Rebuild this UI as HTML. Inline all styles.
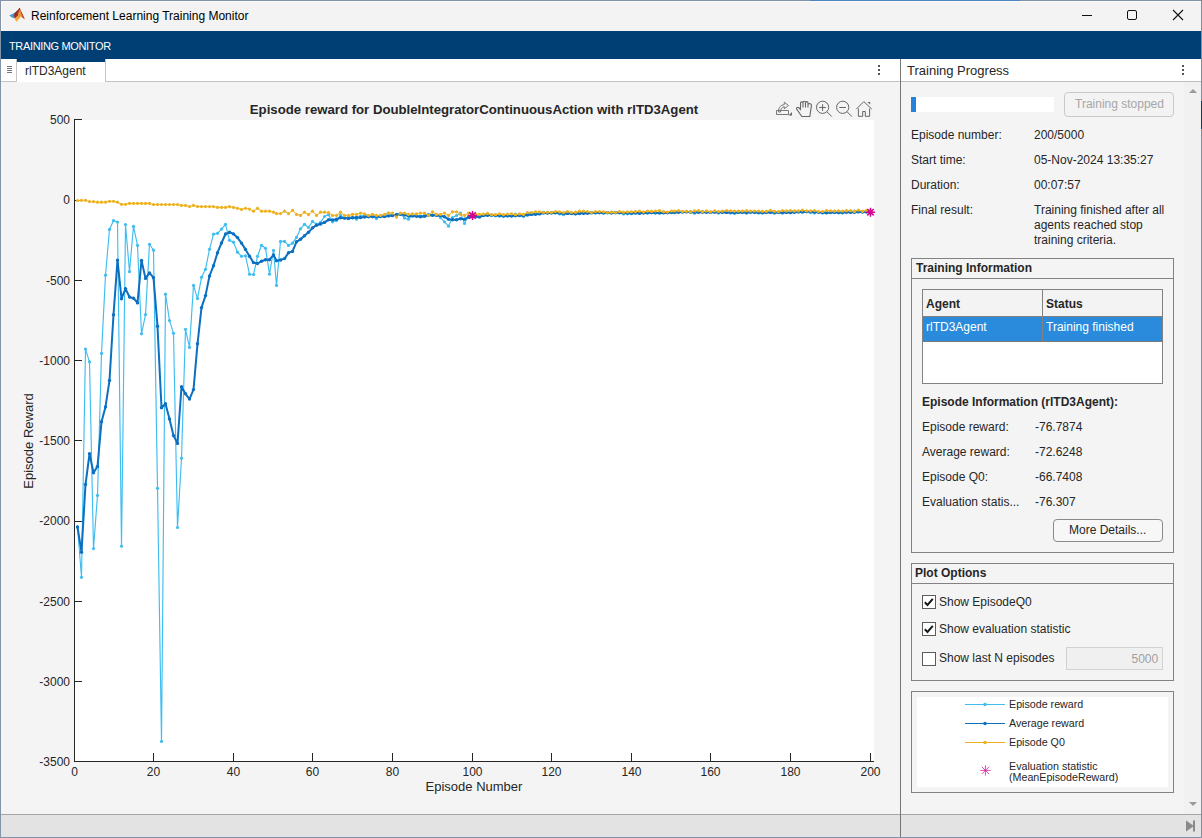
<!DOCTYPE html>
<html><head><meta charset="utf-8">
<style>
*{margin:0;padding:0;box-sizing:border-box}
html,body{width:1202px;height:838px;overflow:hidden;background:#f3f3f3;font-family:"Liberation Sans",sans-serif;color:#262626}
.a{position:absolute}
.t{position:absolute;white-space:nowrap;line-height:1;font-size:12px}
svg{position:absolute;left:0;top:0}
</style></head><body>
<!-- window frame -->
<div class="a" style="left:0;top:0;width:1202px;height:1px;background:#8394a8"></div>
<div class="a" style="left:0;top:0;width:1px;height:838px;background:#8394a8"></div>
<div class="a" style="left:1201px;top:0;width:1px;height:838px;background:#8a8d92"></div>
<div class="a" style="left:1201px;top:101px;width:1px;height:28px;background:#003f73"></div>
<div class="a" style="left:810px;top:0;width:210px;height:1px;background:#4a86c4"></div>
<div class="a" style="left:1px;top:1px;width:1200px;height:1px;background:#fbfbfb"></div>
<div class="a" style="left:1px;top:1px;width:1px;height:836px;background:#fbfbfb"></div>

<!-- title bar -->
<svg width="30" height="30" style="left:0;top:0" viewBox="0 0 30 30">
  <defs><linearGradient id="lg1" x1="0" y1="0" x2="0" y2="1"><stop offset="0" stop-color="#e07a2a"/><stop offset="1" stop-color="#f6b640"/></linearGradient></defs>
  <path d="M9.2,15.6L13.5,13.6L16,12L18.2,9.8L15.5,17.5L12.8,18Z" fill="#3f97dc"/>
  <path d="M13.8,14L16,12L18.2,9.8L16.5,16Z" fill="#2a5f98"/>
  <path d="M14,14.2L19.6,7.9L18,16.5L14.5,18.8Z" fill="#a32d17"/>
  <path d="M19.6,7.9L21.5,12.5L24.8,19.2L21,16.5L16.4,22L14.6,18.6L18.2,15.2Z" fill="url(#lg1)"/>
  <path d="M19.7,8.1L22,12.8L24.8,19.2L22.3,17.4L20.8,11.5Z" fill="#c2401c"/>
  <path d="M18.8,8.6L19.6,7.9L20.4,9.2L19,10.5Z" fill="#6d2a12"/>
</svg>
<div class="t" style="left:31px;top:10px;font-size:12px;color:#000">Reinforcement Learning Training Monitor</div>
<div class="a" style="left:1082px;top:15px;width:10px;height:1px;background:#111"></div>
<div class="a" style="left:1127px;top:10px;width:10px;height:10px;border:1px solid #111;border-radius:2px"></div>
<svg width="12" height="12" style="left:1172px;top:9px" viewBox="0 0 12 12"><path d="M1,1L11,11M11,1L1,11" stroke="#111" stroke-width="1.1"/></svg>

<!-- navy toolstrip -->
<div class="a" style="left:1px;top:31px;width:1200px;height:28px;background:#003f73"></div>
<div class="t" style="left:9px;top:41px;font-size:11px;color:#fff;letter-spacing:-0.35px">TRAINING MONITOR</div>

<!-- document tab strip (left) -->
<div class="a" style="left:1px;top:59px;width:899px;height:23px;background:#fff;border-bottom:1px solid #c4c4c4"></div>
<div class="a" style="left:1px;top:59px;width:16px;height:23px;background:#fff;border-right:1px solid #c4c4c4;border-bottom:1px solid #c4c4c4"></div>
<div class="a" style="left:7px;top:66px;width:5px;height:1px;background:#777"></div>
<div class="a" style="left:7px;top:68px;width:5px;height:1px;background:#777"></div>
<div class="a" style="left:7px;top:70px;width:5px;height:1px;background:#777"></div>
<div class="a" style="left:7px;top:72px;width:5px;height:1px;background:#777"></div>
<div class="a" style="left:17px;top:59px;width:89px;height:23px;background:#fff;border-right:1px solid #c4c4c4"></div>
<div class="a" style="left:17px;top:59px;width:88px;height:3px;background:#003f73"></div>
<div class="t" style="left:25px;top:65px;font-size:12px;color:#262626">rlTD3Agent</div>
<div class="a" style="left:878px;top:65px;width:2px;height:2px;background:#555"></div>
<div class="a" style="left:878px;top:69px;width:2px;height:2px;background:#555"></div>
<div class="a" style="left:878px;top:73px;width:2px;height:2px;background:#555"></div>

<!-- plot area bg -->
<div class="a" style="left:1px;top:82px;width:899px;height:732px;background:#f4f4f4"></div>

<!-- chart -->
<svg width="1202" height="838" viewBox="0 0 1202 838">
<rect x="74" y="120" width="800" height="642" fill="#fff"/>
<path d="M74.5,119V761.5H874" stroke="#262626" stroke-width="1" fill="none" shape-rendering="crispEdges"/>
<path d="M74,119.5H82M74,200.5H82M74,280.5H82M74,360.5H82M74,440.5H82M74,521.5H82M74,601.5H82M74,681.5H82M74,761.5H82M74.5,761V753M153.5,761V753M233.5,761V753M312.5,761V753M392.5,761V753M472.5,761V753M551.5,761V753M631.5,761V753M710.5,761V753M790.5,761V753M870.5,761V753" stroke="#262626" stroke-width="1" fill="none" shape-rendering="crispEdges"/>
<g font-family="Liberation Sans" font-size="12" fill="#262626"><text x="70" y="124.1" text-anchor="end">500</text><text x="70" y="204.4" text-anchor="end">0</text><text x="70" y="284.6" text-anchor="end">-500</text><text x="70" y="364.9" text-anchor="end">-1000</text><text x="70" y="445.1" text-anchor="end">-1500</text><text x="70" y="525.3" text-anchor="end">-2000</text><text x="70" y="605.6" text-anchor="end">-2500</text><text x="70" y="685.8" text-anchor="end">-3000</text><text x="70" y="766.1" text-anchor="end">-3500</text><text x="74.5" y="775.9" text-anchor="middle">0</text><text x="153.5" y="775.9" text-anchor="middle">20</text><text x="233.5" y="775.9" text-anchor="middle">40</text><text x="312.5" y="775.9" text-anchor="middle">60</text><text x="392.5" y="775.9" text-anchor="middle">80</text><text x="472.5" y="775.9" text-anchor="middle">100</text><text x="551.5" y="775.9" text-anchor="middle">120</text><text x="631.5" y="775.9" text-anchor="middle">140</text><text x="710.5" y="775.9" text-anchor="middle">160</text><text x="790.5" y="775.9" text-anchor="middle">180</text><text x="870.5" y="775.9" text-anchor="middle">200</text></g>
<text x="474" y="790.5" text-anchor="middle" font-family="Liberation Sans" font-size="13" fill="#262626">Episode Number</text>
<text transform="translate(33.3,441) rotate(-90)" text-anchor="middle" font-family="Liberation Sans" font-size="13" fill="#262626">Episode Reward</text>
<text x="474" y="114" text-anchor="middle" font-family="Liberation Sans" font-weight="bold" font-size="13.2" fill="#262626">Episode reward for DoubleIntegratorContinuousAction with rlTD3Agent</text>
<polyline points="77.5,527.0 81.5,577.3 85.5,349.1 89.5,361.8 93.5,548.6 97.5,495.4 101.5,353.4 105.5,275.2 109.5,229.4 113.5,220.5 117.5,222.1 121.5,546.2 125.5,224.6 129.5,271.7 133.5,226.4 137.5,245.4 141.5,333.8 145.5,314.6 149.5,244.3 153.5,250.2 157.5,488.3 161.5,741.4 165.5,294.2 169.5,320.6 173.5,333.3 177.5,527.5 181.5,458.2 185.5,329.3 189.5,347.4 193.5,285.4 197.5,298.6 201.5,277.3 205.5,269.3 209.5,249.3 213.5,234.2 217.5,233.3 221.5,229.1 225.5,224.3 229.5,240.3 233.5,242.2 237.5,252.2 241.5,256.3 245.5,255.8 249.5,274.2 253.5,274.6 257.5,256.3 261.5,245.3 265.5,248.3 269.5,274.2 273.5,250.4 276.5,285.4 280.5,241.4 284.5,241.4 288.5,245.4 292.5,243.2 296.5,237.4 300.5,228.8 304.5,224.3 308.5,227.5 312.5,221.4 316.5,224.2 320.5,222.4 324.5,216.5 328.5,214.6 332.5,221.8 336.5,220.6 340.5,215.2 344.5,218.2 348.5,216.8 352.5,217.6 356.5,219.2 360.5,216.0 364.5,215.2 368.5,216.0 372.5,216.8 376.5,218.6 380.5,216.0 384.5,215.2 388.5,213.1 392.5,215.2 396.5,214.4 400.5,213.6 404.5,218.1 408.5,219.2 412.5,215.2 416.5,215.2 420.5,216.0 424.5,215.2 428.5,214.4 432.5,215.2 436.5,215.2 440.5,217.6 444.5,221.8 448.5,226.2 452.5,217.6 456.5,215.5 460.5,213.1 464.5,223.5 468.5,216.0 472.5,215.2 475.5,215.7 479.5,215.1 483.5,215.4 487.5,215.0 491.5,215.0 495.5,216.0 499.5,216.1 503.5,216.6 507.5,215.7 511.5,215.7 515.5,214.2 519.5,215.3 523.5,216.6 527.5,213.2 531.5,212.9 535.5,213.8 539.5,212.9 543.5,212.4 547.5,213.1 551.5,212.7 555.5,212.8 559.5,214.0 563.5,214.7 567.5,212.9 571.5,213.5 575.5,214.0 579.5,212.4 583.5,213.2 587.5,212.7 591.5,212.4 595.5,212.7 599.5,212.3 603.5,213.3 607.5,212.5 611.5,213.2 615.5,212.3 619.5,212.4 623.5,213.9 627.5,213.8 631.5,213.7 635.5,211.9 639.5,212.9 643.5,212.5 647.5,213.1 651.5,212.7 655.5,212.9 659.5,213.0 663.5,212.5 667.5,212.5 671.5,211.9 674.5,212.3 678.5,211.8 682.5,211.9 686.5,211.7 690.5,212.3 694.5,213.2 698.5,211.9 702.5,211.7 706.5,211.8 710.5,212.4 714.5,212.1 718.5,213.1 722.5,211.9 726.5,212.4 730.5,212.9 734.5,213.3 738.5,211.8 742.5,211.5 746.5,213.2 750.5,211.8 754.5,212.6 758.5,213.1 762.5,212.8 766.5,211.8 770.5,211.6 774.5,213.2 778.5,212.1 782.5,213.2 786.5,211.9 790.5,212.6 794.5,211.5 798.5,211.3 802.5,212.2 806.5,211.3 810.5,212.6 814.5,213.0 818.5,212.0 822.5,213.1 826.5,212.8 830.5,212.3 834.5,211.9 838.5,212.8 842.5,213.0 846.5,211.4 850.5,212.5 854.5,211.2 858.5,211.3 862.5,212.3 866.5,212.1 870.5,212.3" fill="none" stroke="#40bdf0" stroke-width="1.15" stroke-linejoin="round"/><g fill="#40bdf0"><circle cx="77.5" cy="527.0" r="1.6"/><circle cx="81.5" cy="577.3" r="1.6"/><circle cx="85.5" cy="349.1" r="1.6"/><circle cx="89.5" cy="361.8" r="1.6"/><circle cx="93.5" cy="548.6" r="1.6"/><circle cx="97.5" cy="495.4" r="1.6"/><circle cx="101.5" cy="353.4" r="1.6"/><circle cx="105.5" cy="275.2" r="1.6"/><circle cx="109.5" cy="229.4" r="1.6"/><circle cx="113.5" cy="220.5" r="1.6"/><circle cx="117.5" cy="222.1" r="1.6"/><circle cx="121.5" cy="546.2" r="1.6"/><circle cx="125.5" cy="224.6" r="1.6"/><circle cx="129.5" cy="271.7" r="1.6"/><circle cx="133.5" cy="226.4" r="1.6"/><circle cx="137.5" cy="245.4" r="1.6"/><circle cx="141.5" cy="333.8" r="1.6"/><circle cx="145.5" cy="314.6" r="1.6"/><circle cx="149.5" cy="244.3" r="1.6"/><circle cx="153.5" cy="250.2" r="1.6"/><circle cx="157.5" cy="488.3" r="1.6"/><circle cx="161.5" cy="741.4" r="1.6"/><circle cx="165.5" cy="294.2" r="1.6"/><circle cx="169.5" cy="320.6" r="1.6"/><circle cx="173.5" cy="333.3" r="1.6"/><circle cx="177.5" cy="527.5" r="1.6"/><circle cx="181.5" cy="458.2" r="1.6"/><circle cx="185.5" cy="329.3" r="1.6"/><circle cx="189.5" cy="347.4" r="1.6"/><circle cx="193.5" cy="285.4" r="1.6"/><circle cx="197.5" cy="298.6" r="1.6"/><circle cx="201.5" cy="277.3" r="1.6"/><circle cx="205.5" cy="269.3" r="1.6"/><circle cx="209.5" cy="249.3" r="1.6"/><circle cx="213.5" cy="234.2" r="1.6"/><circle cx="217.5" cy="233.3" r="1.6"/><circle cx="221.5" cy="229.1" r="1.6"/><circle cx="225.5" cy="224.3" r="1.6"/><circle cx="229.5" cy="240.3" r="1.6"/><circle cx="233.5" cy="242.2" r="1.6"/><circle cx="237.5" cy="252.2" r="1.6"/><circle cx="241.5" cy="256.3" r="1.6"/><circle cx="245.5" cy="255.8" r="1.6"/><circle cx="249.5" cy="274.2" r="1.6"/><circle cx="253.5" cy="274.6" r="1.6"/><circle cx="257.5" cy="256.3" r="1.6"/><circle cx="261.5" cy="245.3" r="1.6"/><circle cx="265.5" cy="248.3" r="1.6"/><circle cx="269.5" cy="274.2" r="1.6"/><circle cx="273.5" cy="250.4" r="1.6"/><circle cx="276.5" cy="285.4" r="1.6"/><circle cx="280.5" cy="241.4" r="1.6"/><circle cx="284.5" cy="241.4" r="1.6"/><circle cx="288.5" cy="245.4" r="1.6"/><circle cx="292.5" cy="243.2" r="1.6"/><circle cx="296.5" cy="237.4" r="1.6"/><circle cx="300.5" cy="228.8" r="1.6"/><circle cx="304.5" cy="224.3" r="1.6"/><circle cx="308.5" cy="227.5" r="1.6"/><circle cx="312.5" cy="221.4" r="1.6"/><circle cx="316.5" cy="224.2" r="1.6"/><circle cx="320.5" cy="222.4" r="1.6"/><circle cx="324.5" cy="216.5" r="1.6"/><circle cx="328.5" cy="214.6" r="1.6"/><circle cx="332.5" cy="221.8" r="1.6"/><circle cx="336.5" cy="220.6" r="1.6"/><circle cx="340.5" cy="215.2" r="1.6"/><circle cx="344.5" cy="218.2" r="1.6"/><circle cx="348.5" cy="216.8" r="1.6"/><circle cx="352.5" cy="217.6" r="1.6"/><circle cx="356.5" cy="219.2" r="1.6"/><circle cx="360.5" cy="216.0" r="1.6"/><circle cx="364.5" cy="215.2" r="1.6"/><circle cx="368.5" cy="216.0" r="1.6"/><circle cx="372.5" cy="216.8" r="1.6"/><circle cx="376.5" cy="218.6" r="1.6"/><circle cx="380.5" cy="216.0" r="1.6"/><circle cx="384.5" cy="215.2" r="1.6"/><circle cx="388.5" cy="213.1" r="1.6"/><circle cx="392.5" cy="215.2" r="1.6"/><circle cx="396.5" cy="214.4" r="1.6"/><circle cx="400.5" cy="213.6" r="1.6"/><circle cx="404.5" cy="218.1" r="1.6"/><circle cx="408.5" cy="219.2" r="1.6"/><circle cx="412.5" cy="215.2" r="1.6"/><circle cx="416.5" cy="215.2" r="1.6"/><circle cx="420.5" cy="216.0" r="1.6"/><circle cx="424.5" cy="215.2" r="1.6"/><circle cx="428.5" cy="214.4" r="1.6"/><circle cx="432.5" cy="215.2" r="1.6"/><circle cx="436.5" cy="215.2" r="1.6"/><circle cx="440.5" cy="217.6" r="1.6"/><circle cx="444.5" cy="221.8" r="1.6"/><circle cx="448.5" cy="226.2" r="1.6"/><circle cx="452.5" cy="217.6" r="1.6"/><circle cx="456.5" cy="215.5" r="1.6"/><circle cx="460.5" cy="213.1" r="1.6"/><circle cx="464.5" cy="223.5" r="1.6"/><circle cx="468.5" cy="216.0" r="1.6"/><circle cx="472.5" cy="215.2" r="1.6"/><circle cx="475.5" cy="215.7" r="1.6"/><circle cx="479.5" cy="215.1" r="1.6"/><circle cx="483.5" cy="215.4" r="1.6"/><circle cx="487.5" cy="215.0" r="1.6"/><circle cx="491.5" cy="215.0" r="1.6"/><circle cx="495.5" cy="216.0" r="1.6"/><circle cx="499.5" cy="216.1" r="1.6"/><circle cx="503.5" cy="216.6" r="1.6"/><circle cx="507.5" cy="215.7" r="1.6"/><circle cx="511.5" cy="215.7" r="1.6"/><circle cx="515.5" cy="214.2" r="1.6"/><circle cx="519.5" cy="215.3" r="1.6"/><circle cx="523.5" cy="216.6" r="1.6"/><circle cx="527.5" cy="213.2" r="1.6"/><circle cx="531.5" cy="212.9" r="1.6"/><circle cx="535.5" cy="213.8" r="1.6"/><circle cx="539.5" cy="212.9" r="1.6"/><circle cx="543.5" cy="212.4" r="1.6"/><circle cx="547.5" cy="213.1" r="1.6"/><circle cx="551.5" cy="212.7" r="1.6"/><circle cx="555.5" cy="212.8" r="1.6"/><circle cx="559.5" cy="214.0" r="1.6"/><circle cx="563.5" cy="214.7" r="1.6"/><circle cx="567.5" cy="212.9" r="1.6"/><circle cx="571.5" cy="213.5" r="1.6"/><circle cx="575.5" cy="214.0" r="1.6"/><circle cx="579.5" cy="212.4" r="1.6"/><circle cx="583.5" cy="213.2" r="1.6"/><circle cx="587.5" cy="212.7" r="1.6"/><circle cx="591.5" cy="212.4" r="1.6"/><circle cx="595.5" cy="212.7" r="1.6"/><circle cx="599.5" cy="212.3" r="1.6"/><circle cx="603.5" cy="213.3" r="1.6"/><circle cx="607.5" cy="212.5" r="1.6"/><circle cx="611.5" cy="213.2" r="1.6"/><circle cx="615.5" cy="212.3" r="1.6"/><circle cx="619.5" cy="212.4" r="1.6"/><circle cx="623.5" cy="213.9" r="1.6"/><circle cx="627.5" cy="213.8" r="1.6"/><circle cx="631.5" cy="213.7" r="1.6"/><circle cx="635.5" cy="211.9" r="1.6"/><circle cx="639.5" cy="212.9" r="1.6"/><circle cx="643.5" cy="212.5" r="1.6"/><circle cx="647.5" cy="213.1" r="1.6"/><circle cx="651.5" cy="212.7" r="1.6"/><circle cx="655.5" cy="212.9" r="1.6"/><circle cx="659.5" cy="213.0" r="1.6"/><circle cx="663.5" cy="212.5" r="1.6"/><circle cx="667.5" cy="212.5" r="1.6"/><circle cx="671.5" cy="211.9" r="1.6"/><circle cx="674.5" cy="212.3" r="1.6"/><circle cx="678.5" cy="211.8" r="1.6"/><circle cx="682.5" cy="211.9" r="1.6"/><circle cx="686.5" cy="211.7" r="1.6"/><circle cx="690.5" cy="212.3" r="1.6"/><circle cx="694.5" cy="213.2" r="1.6"/><circle cx="698.5" cy="211.9" r="1.6"/><circle cx="702.5" cy="211.7" r="1.6"/><circle cx="706.5" cy="211.8" r="1.6"/><circle cx="710.5" cy="212.4" r="1.6"/><circle cx="714.5" cy="212.1" r="1.6"/><circle cx="718.5" cy="213.1" r="1.6"/><circle cx="722.5" cy="211.9" r="1.6"/><circle cx="726.5" cy="212.4" r="1.6"/><circle cx="730.5" cy="212.9" r="1.6"/><circle cx="734.5" cy="213.3" r="1.6"/><circle cx="738.5" cy="211.8" r="1.6"/><circle cx="742.5" cy="211.5" r="1.6"/><circle cx="746.5" cy="213.2" r="1.6"/><circle cx="750.5" cy="211.8" r="1.6"/><circle cx="754.5" cy="212.6" r="1.6"/><circle cx="758.5" cy="213.1" r="1.6"/><circle cx="762.5" cy="212.8" r="1.6"/><circle cx="766.5" cy="211.8" r="1.6"/><circle cx="770.5" cy="211.6" r="1.6"/><circle cx="774.5" cy="213.2" r="1.6"/><circle cx="778.5" cy="212.1" r="1.6"/><circle cx="782.5" cy="213.2" r="1.6"/><circle cx="786.5" cy="211.9" r="1.6"/><circle cx="790.5" cy="212.6" r="1.6"/><circle cx="794.5" cy="211.5" r="1.6"/><circle cx="798.5" cy="211.3" r="1.6"/><circle cx="802.5" cy="212.2" r="1.6"/><circle cx="806.5" cy="211.3" r="1.6"/><circle cx="810.5" cy="212.6" r="1.6"/><circle cx="814.5" cy="213.0" r="1.6"/><circle cx="818.5" cy="212.0" r="1.6"/><circle cx="822.5" cy="213.1" r="1.6"/><circle cx="826.5" cy="212.8" r="1.6"/><circle cx="830.5" cy="212.3" r="1.6"/><circle cx="834.5" cy="211.9" r="1.6"/><circle cx="838.5" cy="212.8" r="1.6"/><circle cx="842.5" cy="213.0" r="1.6"/><circle cx="846.5" cy="211.4" r="1.6"/><circle cx="850.5" cy="212.5" r="1.6"/><circle cx="854.5" cy="211.2" r="1.6"/><circle cx="858.5" cy="211.3" r="1.6"/><circle cx="862.5" cy="212.3" r="1.6"/><circle cx="866.5" cy="212.1" r="1.6"/><circle cx="870.5" cy="212.3" r="1.6"/></g>
<polyline points="77.5,527.0 81.5,552.2 85.5,484.5 89.5,453.8 93.5,472.8 97.5,466.4 101.5,421.7 105.5,406.9 109.5,380.4 113.5,314.8 117.5,260.1 121.5,298.7 125.5,288.6 129.5,297.0 133.5,298.2 137.5,302.9 141.5,260.4 145.5,278.4 149.5,272.9 153.5,277.7 157.5,326.2 161.5,407.8 165.5,403.7 169.5,419.0 173.5,435.6 177.5,443.4 181.5,386.8 185.5,393.8 189.5,399.1 193.5,389.6 197.5,343.8 201.5,307.6 205.5,295.6 209.5,276.0 213.5,265.7 217.5,252.7 221.5,243.0 225.5,234.0 229.5,232.3 233.5,233.9 237.5,237.6 241.5,243.1 245.5,249.4 249.5,256.2 253.5,262.6 257.5,263.5 261.5,261.2 265.5,259.7 269.5,259.7 273.5,254.9 276.5,260.7 280.5,260.0 284.5,258.6 288.5,252.8 292.5,251.4 296.5,241.8 300.5,239.3 304.5,235.8 308.5,232.3 312.5,227.9 316.5,225.2 320.5,224.0 324.5,222.4 328.5,219.8 332.5,219.9 336.5,219.2 340.5,217.7 344.5,218.1 348.5,218.5 352.5,217.7 356.5,217.4 360.5,217.6 364.5,217.0 368.5,216.8 372.5,216.6 376.5,216.5 380.5,216.5 384.5,216.5 388.5,215.9 392.5,215.6 396.5,214.8 400.5,214.3 404.5,214.9 408.5,216.1 412.5,216.1 416.5,216.3 420.5,216.7 424.5,216.2 428.5,215.2 432.5,215.2 436.5,215.2 440.5,215.5 444.5,216.8 448.5,219.2 452.5,219.7 456.5,219.7 460.5,218.8 464.5,219.2 468.5,217.2 472.5,216.7 475.5,216.7 479.5,217.1 483.5,215.5 487.5,215.3 491.5,215.2 495.5,215.3 499.5,215.5 503.5,215.8 507.5,215.9 511.5,216.0 515.5,215.7 519.5,215.5 523.5,215.5 527.5,215.0 531.5,214.4 535.5,214.3 539.5,213.9 543.5,213.0 547.5,213.0 551.5,213.0 555.5,212.8 559.5,213.0 563.5,213.4 567.5,213.4 571.5,213.6 575.5,213.8 579.5,213.5 583.5,213.2 587.5,213.2 591.5,212.9 595.5,212.7 599.5,212.7 603.5,212.7 607.5,212.7 611.5,212.8 615.5,212.7 619.5,212.8 623.5,212.9 627.5,213.1 631.5,213.2 635.5,213.1 639.5,213.2 643.5,213.0 647.5,212.8 651.5,212.6 655.5,212.8 659.5,212.9 663.5,212.9 667.5,212.7 671.5,212.6 674.5,212.5 678.5,212.2 682.5,212.1 686.5,211.9 690.5,212.0 694.5,212.2 698.5,212.2 702.5,212.2 706.5,212.2 710.5,212.2 714.5,212.0 718.5,212.2 722.5,212.3 726.5,212.4 730.5,212.5 734.5,212.7 738.5,212.4 742.5,212.4 746.5,212.5 750.5,212.3 754.5,212.2 758.5,212.4 762.5,212.7 766.5,212.4 770.5,212.4 774.5,212.5 778.5,212.3 782.5,212.4 786.5,212.4 790.5,212.6 794.5,212.3 798.5,212.1 802.5,211.9 806.5,211.8 810.5,211.8 814.5,212.1 818.5,212.2 822.5,212.4 826.5,212.7 830.5,212.6 834.5,212.4 838.5,212.6 842.5,212.6 846.5,212.3 850.5,212.3 854.5,212.2 858.5,211.9 862.5,211.7 866.5,211.9 870.5,211.8" fill="none" stroke="#0d6fc0" stroke-width="2" stroke-linejoin="round"/><g fill="#0d6fc0"><circle cx="77.5" cy="527.0" r="1.7"/><circle cx="81.5" cy="552.2" r="1.7"/><circle cx="85.5" cy="484.5" r="1.7"/><circle cx="89.5" cy="453.8" r="1.7"/><circle cx="93.5" cy="472.8" r="1.7"/><circle cx="97.5" cy="466.4" r="1.7"/><circle cx="101.5" cy="421.7" r="1.7"/><circle cx="105.5" cy="406.9" r="1.7"/><circle cx="109.5" cy="380.4" r="1.7"/><circle cx="113.5" cy="314.8" r="1.7"/><circle cx="117.5" cy="260.1" r="1.7"/><circle cx="121.5" cy="298.7" r="1.7"/><circle cx="125.5" cy="288.6" r="1.7"/><circle cx="129.5" cy="297.0" r="1.7"/><circle cx="133.5" cy="298.2" r="1.7"/><circle cx="137.5" cy="302.9" r="1.7"/><circle cx="141.5" cy="260.4" r="1.7"/><circle cx="145.5" cy="278.4" r="1.7"/><circle cx="149.5" cy="272.9" r="1.7"/><circle cx="153.5" cy="277.7" r="1.7"/><circle cx="157.5" cy="326.2" r="1.7"/><circle cx="161.5" cy="407.8" r="1.7"/><circle cx="165.5" cy="403.7" r="1.7"/><circle cx="169.5" cy="419.0" r="1.7"/><circle cx="173.5" cy="435.6" r="1.7"/><circle cx="177.5" cy="443.4" r="1.7"/><circle cx="181.5" cy="386.8" r="1.7"/><circle cx="185.5" cy="393.8" r="1.7"/><circle cx="189.5" cy="399.1" r="1.7"/><circle cx="193.5" cy="389.6" r="1.7"/><circle cx="197.5" cy="343.8" r="1.7"/><circle cx="201.5" cy="307.6" r="1.7"/><circle cx="205.5" cy="295.6" r="1.7"/><circle cx="209.5" cy="276.0" r="1.7"/><circle cx="213.5" cy="265.7" r="1.7"/><circle cx="217.5" cy="252.7" r="1.7"/><circle cx="221.5" cy="243.0" r="1.7"/><circle cx="225.5" cy="234.0" r="1.7"/><circle cx="229.5" cy="232.3" r="1.7"/><circle cx="233.5" cy="233.9" r="1.7"/><circle cx="237.5" cy="237.6" r="1.7"/><circle cx="241.5" cy="243.1" r="1.7"/><circle cx="245.5" cy="249.4" r="1.7"/><circle cx="249.5" cy="256.2" r="1.7"/><circle cx="253.5" cy="262.6" r="1.7"/><circle cx="257.5" cy="263.5" r="1.7"/><circle cx="261.5" cy="261.2" r="1.7"/><circle cx="265.5" cy="259.7" r="1.7"/><circle cx="269.5" cy="259.7" r="1.7"/><circle cx="273.5" cy="254.9" r="1.7"/><circle cx="276.5" cy="260.7" r="1.7"/><circle cx="280.5" cy="260.0" r="1.7"/><circle cx="284.5" cy="258.6" r="1.7"/><circle cx="288.5" cy="252.8" r="1.7"/><circle cx="292.5" cy="251.4" r="1.7"/><circle cx="296.5" cy="241.8" r="1.7"/><circle cx="300.5" cy="239.3" r="1.7"/><circle cx="304.5" cy="235.8" r="1.7"/><circle cx="308.5" cy="232.3" r="1.7"/><circle cx="312.5" cy="227.9" r="1.7"/><circle cx="316.5" cy="225.2" r="1.7"/><circle cx="320.5" cy="224.0" r="1.7"/><circle cx="324.5" cy="222.4" r="1.7"/><circle cx="328.5" cy="219.8" r="1.7"/><circle cx="332.5" cy="219.9" r="1.7"/><circle cx="336.5" cy="219.2" r="1.7"/><circle cx="340.5" cy="217.7" r="1.7"/><circle cx="344.5" cy="218.1" r="1.7"/><circle cx="348.5" cy="218.5" r="1.7"/><circle cx="352.5" cy="217.7" r="1.7"/><circle cx="356.5" cy="217.4" r="1.7"/><circle cx="360.5" cy="217.6" r="1.7"/><circle cx="364.5" cy="217.0" r="1.7"/><circle cx="368.5" cy="216.8" r="1.7"/><circle cx="372.5" cy="216.6" r="1.7"/><circle cx="376.5" cy="216.5" r="1.7"/><circle cx="380.5" cy="216.5" r="1.7"/><circle cx="384.5" cy="216.5" r="1.7"/><circle cx="388.5" cy="215.9" r="1.7"/><circle cx="392.5" cy="215.6" r="1.7"/><circle cx="396.5" cy="214.8" r="1.7"/><circle cx="400.5" cy="214.3" r="1.7"/><circle cx="404.5" cy="214.9" r="1.7"/><circle cx="408.5" cy="216.1" r="1.7"/><circle cx="412.5" cy="216.1" r="1.7"/><circle cx="416.5" cy="216.3" r="1.7"/><circle cx="420.5" cy="216.7" r="1.7"/><circle cx="424.5" cy="216.2" r="1.7"/><circle cx="428.5" cy="215.2" r="1.7"/><circle cx="432.5" cy="215.2" r="1.7"/><circle cx="436.5" cy="215.2" r="1.7"/><circle cx="440.5" cy="215.5" r="1.7"/><circle cx="444.5" cy="216.8" r="1.7"/><circle cx="448.5" cy="219.2" r="1.7"/><circle cx="452.5" cy="219.7" r="1.7"/><circle cx="456.5" cy="219.7" r="1.7"/><circle cx="460.5" cy="218.8" r="1.7"/><circle cx="464.5" cy="219.2" r="1.7"/><circle cx="468.5" cy="217.2" r="1.7"/><circle cx="472.5" cy="216.7" r="1.7"/><circle cx="475.5" cy="216.7" r="1.7"/><circle cx="479.5" cy="217.1" r="1.7"/><circle cx="483.5" cy="215.5" r="1.7"/><circle cx="487.5" cy="215.3" r="1.7"/><circle cx="491.5" cy="215.2" r="1.7"/><circle cx="495.5" cy="215.3" r="1.7"/><circle cx="499.5" cy="215.5" r="1.7"/><circle cx="503.5" cy="215.8" r="1.7"/><circle cx="507.5" cy="215.9" r="1.7"/><circle cx="511.5" cy="216.0" r="1.7"/><circle cx="515.5" cy="215.7" r="1.7"/><circle cx="519.5" cy="215.5" r="1.7"/><circle cx="523.5" cy="215.5" r="1.7"/><circle cx="527.5" cy="215.0" r="1.7"/><circle cx="531.5" cy="214.4" r="1.7"/><circle cx="535.5" cy="214.3" r="1.7"/><circle cx="539.5" cy="213.9" r="1.7"/><circle cx="543.5" cy="213.0" r="1.7"/><circle cx="547.5" cy="213.0" r="1.7"/><circle cx="551.5" cy="213.0" r="1.7"/><circle cx="555.5" cy="212.8" r="1.7"/><circle cx="559.5" cy="213.0" r="1.7"/><circle cx="563.5" cy="213.4" r="1.7"/><circle cx="567.5" cy="213.4" r="1.7"/><circle cx="571.5" cy="213.6" r="1.7"/><circle cx="575.5" cy="213.8" r="1.7"/><circle cx="579.5" cy="213.5" r="1.7"/><circle cx="583.5" cy="213.2" r="1.7"/><circle cx="587.5" cy="213.2" r="1.7"/><circle cx="591.5" cy="212.9" r="1.7"/><circle cx="595.5" cy="212.7" r="1.7"/><circle cx="599.5" cy="212.7" r="1.7"/><circle cx="603.5" cy="212.7" r="1.7"/><circle cx="607.5" cy="212.7" r="1.7"/><circle cx="611.5" cy="212.8" r="1.7"/><circle cx="615.5" cy="212.7" r="1.7"/><circle cx="619.5" cy="212.8" r="1.7"/><circle cx="623.5" cy="212.9" r="1.7"/><circle cx="627.5" cy="213.1" r="1.7"/><circle cx="631.5" cy="213.2" r="1.7"/><circle cx="635.5" cy="213.1" r="1.7"/><circle cx="639.5" cy="213.2" r="1.7"/><circle cx="643.5" cy="213.0" r="1.7"/><circle cx="647.5" cy="212.8" r="1.7"/><circle cx="651.5" cy="212.6" r="1.7"/><circle cx="655.5" cy="212.8" r="1.7"/><circle cx="659.5" cy="212.9" r="1.7"/><circle cx="663.5" cy="212.9" r="1.7"/><circle cx="667.5" cy="212.7" r="1.7"/><circle cx="671.5" cy="212.6" r="1.7"/><circle cx="674.5" cy="212.5" r="1.7"/><circle cx="678.5" cy="212.2" r="1.7"/><circle cx="682.5" cy="212.1" r="1.7"/><circle cx="686.5" cy="211.9" r="1.7"/><circle cx="690.5" cy="212.0" r="1.7"/><circle cx="694.5" cy="212.2" r="1.7"/><circle cx="698.5" cy="212.2" r="1.7"/><circle cx="702.5" cy="212.2" r="1.7"/><circle cx="706.5" cy="212.2" r="1.7"/><circle cx="710.5" cy="212.2" r="1.7"/><circle cx="714.5" cy="212.0" r="1.7"/><circle cx="718.5" cy="212.2" r="1.7"/><circle cx="722.5" cy="212.3" r="1.7"/><circle cx="726.5" cy="212.4" r="1.7"/><circle cx="730.5" cy="212.5" r="1.7"/><circle cx="734.5" cy="212.7" r="1.7"/><circle cx="738.5" cy="212.4" r="1.7"/><circle cx="742.5" cy="212.4" r="1.7"/><circle cx="746.5" cy="212.5" r="1.7"/><circle cx="750.5" cy="212.3" r="1.7"/><circle cx="754.5" cy="212.2" r="1.7"/><circle cx="758.5" cy="212.4" r="1.7"/><circle cx="762.5" cy="212.7" r="1.7"/><circle cx="766.5" cy="212.4" r="1.7"/><circle cx="770.5" cy="212.4" r="1.7"/><circle cx="774.5" cy="212.5" r="1.7"/><circle cx="778.5" cy="212.3" r="1.7"/><circle cx="782.5" cy="212.4" r="1.7"/><circle cx="786.5" cy="212.4" r="1.7"/><circle cx="790.5" cy="212.6" r="1.7"/><circle cx="794.5" cy="212.3" r="1.7"/><circle cx="798.5" cy="212.1" r="1.7"/><circle cx="802.5" cy="211.9" r="1.7"/><circle cx="806.5" cy="211.8" r="1.7"/><circle cx="810.5" cy="211.8" r="1.7"/><circle cx="814.5" cy="212.1" r="1.7"/><circle cx="818.5" cy="212.2" r="1.7"/><circle cx="822.5" cy="212.4" r="1.7"/><circle cx="826.5" cy="212.7" r="1.7"/><circle cx="830.5" cy="212.6" r="1.7"/><circle cx="834.5" cy="212.4" r="1.7"/><circle cx="838.5" cy="212.6" r="1.7"/><circle cx="842.5" cy="212.6" r="1.7"/><circle cx="846.5" cy="212.3" r="1.7"/><circle cx="850.5" cy="212.3" r="1.7"/><circle cx="854.5" cy="212.2" r="1.7"/><circle cx="858.5" cy="211.9" r="1.7"/><circle cx="862.5" cy="211.7" r="1.7"/><circle cx="866.5" cy="211.9" r="1.7"/><circle cx="870.5" cy="211.8" r="1.7"/></g>
<polyline points="77.5,200.5 81.5,200.3 85.5,200.3 89.5,201.6 93.5,201.6 97.5,202.2 101.5,202.2 105.5,202.2 109.5,201.3 113.5,201.3 117.5,202.2 121.5,204.3 125.5,204.3 129.5,203.4 133.5,203.4 137.5,203.4 141.5,203.4 145.5,203.4 149.5,203.4 153.5,204.5 157.5,204.5 161.5,204.5 165.5,204.5 169.5,204.5 173.5,204.5 177.5,204.5 181.5,205.4 185.5,205.4 189.5,206.6 193.5,205.4 197.5,206.6 201.5,206.6 205.5,206.6 209.5,206.6 213.5,206.6 217.5,207.4 221.5,207.4 225.5,207.4 229.5,206.6 233.5,207.4 237.5,208.3 241.5,209.4 245.5,208.3 249.5,209.1 253.5,211.2 257.5,208.3 261.5,211.2 265.5,211.2 269.5,211.2 273.5,212.2 276.5,213.6 280.5,213.6 284.5,211.2 288.5,213.6 292.5,210.4 296.5,214.4 300.5,215.4 304.5,212.2 308.5,214.6 312.5,211.2 316.5,215.4 320.5,212.2 324.5,212.2 328.5,212.5 332.5,215.4 336.5,215.4 340.5,212.2 344.5,215.4 348.5,215.4 352.5,214.4 356.5,214.4 360.5,213.1 364.5,213.9 368.5,215.4 372.5,214.4 376.5,215.4 380.5,215.4 384.5,214.4 388.5,213.1 392.5,213.1 396.5,217.1 400.5,213.1 404.5,213.1 408.5,214.4 412.5,213.9 416.5,213.9 420.5,213.1 424.5,213.1 428.5,215.4 432.5,211.8 436.5,214.4 440.5,214.4 444.5,213.1 448.5,215.4 452.5,211.8 456.5,211.8 460.5,214.4 464.5,215.4 468.5,213.1 472.5,214.4 475.5,214.1 479.5,214.4 483.5,214.1 487.5,213.4 491.5,214.7 495.5,214.7 499.5,213.8 503.5,214.7 507.5,214.1 511.5,213.8 515.5,214.7 519.5,213.8 523.5,214.4 527.5,212.5 531.5,212.5 535.5,211.8 539.5,211.8 543.5,212.5 547.5,212.2 551.5,212.5 555.5,211.5 559.5,211.8 563.5,212.5 567.5,211.5 571.5,212.5 575.5,212.2 579.5,211.2 583.5,211.2 587.5,211.5 591.5,212.5 595.5,211.5 599.5,211.5 603.5,211.8 607.5,212.5 611.5,212.2 615.5,212.5 619.5,211.5 623.5,212.2 627.5,211.8 631.5,211.8 635.5,211.7 639.5,211.1 643.5,212.0 647.5,211.1 651.5,211.4 655.5,211.0 659.5,210.7 663.5,211.7 667.5,212.0 671.5,211.0 674.5,211.0 678.5,210.6 682.5,211.6 686.5,211.3 690.5,211.9 694.5,210.9 698.5,210.6 702.5,211.8 706.5,210.9 710.5,211.8 714.5,210.9 718.5,211.5 722.5,211.1 726.5,210.5 730.5,210.8 734.5,211.1 738.5,211.1 742.5,211.1 746.5,210.7 750.5,211.1 754.5,211.0 758.5,211.0 762.5,211.3 766.5,211.3 770.5,210.4 774.5,211.3 778.5,211.6 782.5,210.6 786.5,210.9 790.5,210.6 794.5,210.9 798.5,210.9 802.5,210.2 806.5,210.9 810.5,210.9 814.5,210.5 818.5,211.5 822.5,211.5 826.5,210.5 830.5,210.8 834.5,211.1 838.5,210.8 842.5,211.1 846.5,210.7 850.5,210.7 854.5,211.4 858.5,210.1 862.5,211.3 866.5,210.4 870.5,210.7" fill="none" stroke="#edb120" stroke-width="1" stroke-linejoin="round"/><g fill="#edb120"><circle cx="77.5" cy="200.5" r="1.6"/><circle cx="81.5" cy="200.3" r="1.6"/><circle cx="85.5" cy="200.3" r="1.6"/><circle cx="89.5" cy="201.6" r="1.6"/><circle cx="93.5" cy="201.6" r="1.6"/><circle cx="97.5" cy="202.2" r="1.6"/><circle cx="101.5" cy="202.2" r="1.6"/><circle cx="105.5" cy="202.2" r="1.6"/><circle cx="109.5" cy="201.3" r="1.6"/><circle cx="113.5" cy="201.3" r="1.6"/><circle cx="117.5" cy="202.2" r="1.6"/><circle cx="121.5" cy="204.3" r="1.6"/><circle cx="125.5" cy="204.3" r="1.6"/><circle cx="129.5" cy="203.4" r="1.6"/><circle cx="133.5" cy="203.4" r="1.6"/><circle cx="137.5" cy="203.4" r="1.6"/><circle cx="141.5" cy="203.4" r="1.6"/><circle cx="145.5" cy="203.4" r="1.6"/><circle cx="149.5" cy="203.4" r="1.6"/><circle cx="153.5" cy="204.5" r="1.6"/><circle cx="157.5" cy="204.5" r="1.6"/><circle cx="161.5" cy="204.5" r="1.6"/><circle cx="165.5" cy="204.5" r="1.6"/><circle cx="169.5" cy="204.5" r="1.6"/><circle cx="173.5" cy="204.5" r="1.6"/><circle cx="177.5" cy="204.5" r="1.6"/><circle cx="181.5" cy="205.4" r="1.6"/><circle cx="185.5" cy="205.4" r="1.6"/><circle cx="189.5" cy="206.6" r="1.6"/><circle cx="193.5" cy="205.4" r="1.6"/><circle cx="197.5" cy="206.6" r="1.6"/><circle cx="201.5" cy="206.6" r="1.6"/><circle cx="205.5" cy="206.6" r="1.6"/><circle cx="209.5" cy="206.6" r="1.6"/><circle cx="213.5" cy="206.6" r="1.6"/><circle cx="217.5" cy="207.4" r="1.6"/><circle cx="221.5" cy="207.4" r="1.6"/><circle cx="225.5" cy="207.4" r="1.6"/><circle cx="229.5" cy="206.6" r="1.6"/><circle cx="233.5" cy="207.4" r="1.6"/><circle cx="237.5" cy="208.3" r="1.6"/><circle cx="241.5" cy="209.4" r="1.6"/><circle cx="245.5" cy="208.3" r="1.6"/><circle cx="249.5" cy="209.1" r="1.6"/><circle cx="253.5" cy="211.2" r="1.6"/><circle cx="257.5" cy="208.3" r="1.6"/><circle cx="261.5" cy="211.2" r="1.6"/><circle cx="265.5" cy="211.2" r="1.6"/><circle cx="269.5" cy="211.2" r="1.6"/><circle cx="273.5" cy="212.2" r="1.6"/><circle cx="276.5" cy="213.6" r="1.6"/><circle cx="280.5" cy="213.6" r="1.6"/><circle cx="284.5" cy="211.2" r="1.6"/><circle cx="288.5" cy="213.6" r="1.6"/><circle cx="292.5" cy="210.4" r="1.6"/><circle cx="296.5" cy="214.4" r="1.6"/><circle cx="300.5" cy="215.4" r="1.6"/><circle cx="304.5" cy="212.2" r="1.6"/><circle cx="308.5" cy="214.6" r="1.6"/><circle cx="312.5" cy="211.2" r="1.6"/><circle cx="316.5" cy="215.4" r="1.6"/><circle cx="320.5" cy="212.2" r="1.6"/><circle cx="324.5" cy="212.2" r="1.6"/><circle cx="328.5" cy="212.5" r="1.6"/><circle cx="332.5" cy="215.4" r="1.6"/><circle cx="336.5" cy="215.4" r="1.6"/><circle cx="340.5" cy="212.2" r="1.6"/><circle cx="344.5" cy="215.4" r="1.6"/><circle cx="348.5" cy="215.4" r="1.6"/><circle cx="352.5" cy="214.4" r="1.6"/><circle cx="356.5" cy="214.4" r="1.6"/><circle cx="360.5" cy="213.1" r="1.6"/><circle cx="364.5" cy="213.9" r="1.6"/><circle cx="368.5" cy="215.4" r="1.6"/><circle cx="372.5" cy="214.4" r="1.6"/><circle cx="376.5" cy="215.4" r="1.6"/><circle cx="380.5" cy="215.4" r="1.6"/><circle cx="384.5" cy="214.4" r="1.6"/><circle cx="388.5" cy="213.1" r="1.6"/><circle cx="392.5" cy="213.1" r="1.6"/><circle cx="396.5" cy="217.1" r="1.6"/><circle cx="400.5" cy="213.1" r="1.6"/><circle cx="404.5" cy="213.1" r="1.6"/><circle cx="408.5" cy="214.4" r="1.6"/><circle cx="412.5" cy="213.9" r="1.6"/><circle cx="416.5" cy="213.9" r="1.6"/><circle cx="420.5" cy="213.1" r="1.6"/><circle cx="424.5" cy="213.1" r="1.6"/><circle cx="428.5" cy="215.4" r="1.6"/><circle cx="432.5" cy="211.8" r="1.6"/><circle cx="436.5" cy="214.4" r="1.6"/><circle cx="440.5" cy="214.4" r="1.6"/><circle cx="444.5" cy="213.1" r="1.6"/><circle cx="448.5" cy="215.4" r="1.6"/><circle cx="452.5" cy="211.8" r="1.6"/><circle cx="456.5" cy="211.8" r="1.6"/><circle cx="460.5" cy="214.4" r="1.6"/><circle cx="464.5" cy="215.4" r="1.6"/><circle cx="468.5" cy="213.1" r="1.6"/><circle cx="472.5" cy="214.4" r="1.6"/><circle cx="475.5" cy="214.1" r="1.6"/><circle cx="479.5" cy="214.4" r="1.6"/><circle cx="483.5" cy="214.1" r="1.6"/><circle cx="487.5" cy="213.4" r="1.6"/><circle cx="491.5" cy="214.7" r="1.6"/><circle cx="495.5" cy="214.7" r="1.6"/><circle cx="499.5" cy="213.8" r="1.6"/><circle cx="503.5" cy="214.7" r="1.6"/><circle cx="507.5" cy="214.1" r="1.6"/><circle cx="511.5" cy="213.8" r="1.6"/><circle cx="515.5" cy="214.7" r="1.6"/><circle cx="519.5" cy="213.8" r="1.6"/><circle cx="523.5" cy="214.4" r="1.6"/><circle cx="527.5" cy="212.5" r="1.6"/><circle cx="531.5" cy="212.5" r="1.6"/><circle cx="535.5" cy="211.8" r="1.6"/><circle cx="539.5" cy="211.8" r="1.6"/><circle cx="543.5" cy="212.5" r="1.6"/><circle cx="547.5" cy="212.2" r="1.6"/><circle cx="551.5" cy="212.5" r="1.6"/><circle cx="555.5" cy="211.5" r="1.6"/><circle cx="559.5" cy="211.8" r="1.6"/><circle cx="563.5" cy="212.5" r="1.6"/><circle cx="567.5" cy="211.5" r="1.6"/><circle cx="571.5" cy="212.5" r="1.6"/><circle cx="575.5" cy="212.2" r="1.6"/><circle cx="579.5" cy="211.2" r="1.6"/><circle cx="583.5" cy="211.2" r="1.6"/><circle cx="587.5" cy="211.5" r="1.6"/><circle cx="591.5" cy="212.5" r="1.6"/><circle cx="595.5" cy="211.5" r="1.6"/><circle cx="599.5" cy="211.5" r="1.6"/><circle cx="603.5" cy="211.8" r="1.6"/><circle cx="607.5" cy="212.5" r="1.6"/><circle cx="611.5" cy="212.2" r="1.6"/><circle cx="615.5" cy="212.5" r="1.6"/><circle cx="619.5" cy="211.5" r="1.6"/><circle cx="623.5" cy="212.2" r="1.6"/><circle cx="627.5" cy="211.8" r="1.6"/><circle cx="631.5" cy="211.8" r="1.6"/><circle cx="635.5" cy="211.7" r="1.6"/><circle cx="639.5" cy="211.1" r="1.6"/><circle cx="643.5" cy="212.0" r="1.6"/><circle cx="647.5" cy="211.1" r="1.6"/><circle cx="651.5" cy="211.4" r="1.6"/><circle cx="655.5" cy="211.0" r="1.6"/><circle cx="659.5" cy="210.7" r="1.6"/><circle cx="663.5" cy="211.7" r="1.6"/><circle cx="667.5" cy="212.0" r="1.6"/><circle cx="671.5" cy="211.0" r="1.6"/><circle cx="674.5" cy="211.0" r="1.6"/><circle cx="678.5" cy="210.6" r="1.6"/><circle cx="682.5" cy="211.6" r="1.6"/><circle cx="686.5" cy="211.3" r="1.6"/><circle cx="690.5" cy="211.9" r="1.6"/><circle cx="694.5" cy="210.9" r="1.6"/><circle cx="698.5" cy="210.6" r="1.6"/><circle cx="702.5" cy="211.8" r="1.6"/><circle cx="706.5" cy="210.9" r="1.6"/><circle cx="710.5" cy="211.8" r="1.6"/><circle cx="714.5" cy="210.9" r="1.6"/><circle cx="718.5" cy="211.5" r="1.6"/><circle cx="722.5" cy="211.1" r="1.6"/><circle cx="726.5" cy="210.5" r="1.6"/><circle cx="730.5" cy="210.8" r="1.6"/><circle cx="734.5" cy="211.1" r="1.6"/><circle cx="738.5" cy="211.1" r="1.6"/><circle cx="742.5" cy="211.1" r="1.6"/><circle cx="746.5" cy="210.7" r="1.6"/><circle cx="750.5" cy="211.1" r="1.6"/><circle cx="754.5" cy="211.0" r="1.6"/><circle cx="758.5" cy="211.0" r="1.6"/><circle cx="762.5" cy="211.3" r="1.6"/><circle cx="766.5" cy="211.3" r="1.6"/><circle cx="770.5" cy="210.4" r="1.6"/><circle cx="774.5" cy="211.3" r="1.6"/><circle cx="778.5" cy="211.6" r="1.6"/><circle cx="782.5" cy="210.6" r="1.6"/><circle cx="786.5" cy="210.9" r="1.6"/><circle cx="790.5" cy="210.6" r="1.6"/><circle cx="794.5" cy="210.9" r="1.6"/><circle cx="798.5" cy="210.9" r="1.6"/><circle cx="802.5" cy="210.2" r="1.6"/><circle cx="806.5" cy="210.9" r="1.6"/><circle cx="810.5" cy="210.9" r="1.6"/><circle cx="814.5" cy="210.5" r="1.6"/><circle cx="818.5" cy="211.5" r="1.6"/><circle cx="822.5" cy="211.5" r="1.6"/><circle cx="826.5" cy="210.5" r="1.6"/><circle cx="830.5" cy="210.8" r="1.6"/><circle cx="834.5" cy="211.1" r="1.6"/><circle cx="838.5" cy="210.8" r="1.6"/><circle cx="842.5" cy="211.1" r="1.6"/><circle cx="846.5" cy="210.7" r="1.6"/><circle cx="850.5" cy="210.7" r="1.6"/><circle cx="854.5" cy="211.4" r="1.6"/><circle cx="858.5" cy="210.1" r="1.6"/><circle cx="862.5" cy="211.3" r="1.6"/><circle cx="866.5" cy="210.4" r="1.6"/><circle cx="870.5" cy="210.7" r="1.6"/></g>
<path d="M468.00,215.52L477.00,215.52M469.32,212.34L475.68,218.70M472.50,211.02L472.50,220.02M475.68,212.34L469.32,218.70" stroke="#d4008f" stroke-width="1.5" fill="none"/>
<path d="M866.00,212.21L875.00,212.21M867.32,209.03L873.68,215.39M870.50,207.71L870.50,216.71M873.68,209.03L867.32,215.39" stroke="#d4008f" stroke-width="1.5" fill="none"/>
</svg>

<!-- plot toolbar icons -->
<svg width="110" height="24" style="left:770px;top:96px" viewBox="770 96 110 24" fill="none" stroke="#666" stroke-width="1">
  <path d="M776.5,110.5V114.5H788.5V110.5Z" stroke="#777"/>
  <path d="M778.5,112C778.5,107.2 780.8,105 784.3,104.6V102.2L788.5,105.5L784.3,108.8V106.7C782,107 780.5,109 780.5,112Z" stroke="#777"/>
  <path d="M792,112V115.6H788.4Z" fill="#666" stroke="none"/>
  <path d="M801.8,116.5L796.5,108.8Q796.8,107 798.6,107.6L800.5,109.5V103.2Q800.5,101.9 801.75,101.9Q803,101.9 803,103.2V107.5V102.5Q803,101.2 804.25,101.2Q805.5,101.2 805.5,102.5V107.5V102.9Q805.5,101.6 806.75,101.6Q808,101.6 808,102.9V107.5V104.8Q808,103.5 809.75,103.6Q811.5,103.8 811.5,105.2L809.8,116.5Z" stroke-width="1.1"/>
  <circle cx="822.6" cy="107.3" r="6.1"/>
  <path d="M819.2,107.5H825.9M822.6,104.2V110.9M826.9,111.7L831.8,116.6"/>
  <circle cx="842.7" cy="107.3" r="6.1"/>
  <path d="M839.3,107.5H845.9M847,111.7L851.9,116.6"/>
  <path d="M856.3,109.1L863.8,101.6L871.8,109.1M858.4,108.5V116.3H862.7V111.5H865.3V116.3H869.6V108.5"/>
  <path d="M867.4,102H870.2V104.6Z" fill="#666" stroke="none"/>
</svg>

<!-- bottom status bar -->
<div class="a" style="left:1px;top:814px;width:1200px;height:1px;background:#a6a6a6"></div>
<div class="a" style="left:1px;top:815px;width:1200px;height:22px;background:#e3e3e3"></div>
<div class="a" style="left:0;top:837px;width:1202px;height:1px;background:#8394a8"></div>

<!-- right panel -->
<div class="a" style="left:900px;top:59px;width:1px;height:778px;background:#767676"></div>
<div class="a" style="left:901px;top:59px;width:300px;height:23px;background:#fff;border-bottom:1px solid #bdbdbd"></div>
<div class="t" style="left:907px;top:64px;font-size:13px;color:#262626">Training Progress</div>
<div class="a" style="left:1182px;top:65px;width:2px;height:2px;background:#555"></div>
<div class="a" style="left:1182px;top:69px;width:2px;height:2px;background:#555"></div>
<div class="a" style="left:1182px;top:73px;width:2px;height:2px;background:#555"></div>
<div class="a" style="left:901px;top:82px;width:300px;height:732px;background:#f4f4f4"></div>
<div class="a" style="left:1184px;top:82px;width:17px;height:732px;background:#f1f1f1"></div>
<svg width="12" height="8" style="left:1187px;top:87px" viewBox="0 0 12 8"><path d="M2,6H10L6,2Z" fill="#9a9a9a"/></svg>
<svg width="12" height="8" style="left:1187px;top:800px" viewBox="0 0 12 8"><path d="M2,2H10L6,6Z" fill="#9a9a9a"/></svg>

<!-- progress -->
<div class="a" style="left:911px;top:97px;width:143px;height:15px;background:#fff"></div>
<div class="a" style="left:911px;top:97px;width:5px;height:15px;background:#2581d9"></div>
<div class="a" style="left:1064px;top:92px;width:110px;height:25px;border:1px solid #c9c9c9;border-radius:4px;background:#f3f3f3"></div>
<div class="t" style="left:1075px;top:98px;font-size:12px;color:#a7a7a7">Training stopped</div>

<div class="t" style="left:911px;top:129px">Episode number:</div>
<div class="t" style="left:1034px;top:129px">200/5000</div>
<div class="t" style="left:911px;top:154px">Start time:</div>
<div class="t" style="left:1034px;top:154px">05-Nov-2024 13:35:27</div>
<div class="t" style="left:911px;top:179px">Duration:</div>
<div class="t" style="left:1034px;top:179px">00:07:57</div>
<div class="t" style="left:911px;top:204px">Final result:</div>
<div class="t" style="left:1034px;top:204px">Training finished after all</div>
<div class="t" style="left:1034px;top:218.8px">agents reached stop</div>
<div class="t" style="left:1034px;top:233.6px">training criteria.</div>

<!-- Training information panel -->
<div class="a" style="left:911px;top:258px;width:263px;height:295px;border:1px solid #828282"></div>
<div class="a" style="left:912px;top:278px;width:261px;height:1px;background:#828282"></div>
<div class="t" style="left:916px;top:262px;font-weight:bold">Training Information</div>
<div class="a" style="left:922px;top:289px;width:241px;height:95px;border:1px solid #828282;background:#fff"></div>
<div class="a" style="left:923px;top:290px;width:239px;height:27px;background:#f3f3f3;border-bottom:1px solid #828282"></div>
<div class="a" style="left:923px;top:317px;width:239px;height:25px;background:#2a8bdc;border-bottom:1px solid #7a7a7a"></div>
<div class="a" style="left:1042px;top:290px;width:1px;height:52px;background:#828282"></div>
<div class="t" style="left:926px;top:298px;font-weight:bold">Agent</div>
<div class="t" style="left:1046px;top:298px;font-weight:bold">Status</div>
<div class="t" style="left:926px;top:321px;color:#fff">rlTD3Agent</div>
<div class="t" style="left:1046px;top:321px;color:#fff">Training finished</div>
<div class="t" style="left:922px;top:395.5px;font-weight:bold">Episode Information (rlTD3Agent):</div>
<div class="t" style="left:922px;top:420.5px">Episode reward:</div>
<div class="t" style="left:1035px;top:420.5px">-76.7874</div>
<div class="t" style="left:922px;top:445.5px">Average reward:</div>
<div class="t" style="left:1035px;top:445.5px">-72.6248</div>
<div class="t" style="left:922px;top:470.5px">Episode Q0:</div>
<div class="t" style="left:1035px;top:470.5px">-66.7408</div>
<div class="t" style="left:922px;top:495.5px">Evaluation statis...</div>
<div class="t" style="left:1035px;top:495.5px">-76.307</div>
<div class="a" style="left:1053px;top:519px;width:110px;height:23px;border:1px solid #8a8a8a;border-radius:4px;background:#f7f7f7"></div>
<div class="t" style="left:1069px;top:524px">More Details...</div>

<!-- Plot options panel -->
<div class="a" style="left:911px;top:563px;width:263px;height:118px;border:1px solid #828282"></div>
<div class="a" style="left:912px;top:583px;width:261px;height:1px;background:#828282"></div>
<div class="t" style="left:915px;top:567px;font-weight:bold">Plot Options</div>
<div class="a" style="left:922px;top:595px;width:14px;height:14px;border:1px solid #5c5c5c;background:#fff"></div>
<svg width="14" height="14" style="left:922px;top:595px" viewBox="0 0 14 14"><path d="M2.8,7.2L5.5,10L10.8,3.8" stroke="#1a1a1a" stroke-width="2" fill="none"/></svg>
<div class="t" style="left:939px;top:596px">Show EpisodeQ0</div>
<div class="a" style="left:922px;top:622px;width:14px;height:14px;border:1px solid #5c5c5c;background:#fff"></div>
<svg width="14" height="14" style="left:922px;top:622px" viewBox="0 0 14 14"><path d="M2.8,7.2L5.5,10L10.8,3.8" stroke="#1a1a1a" stroke-width="2" fill="none"/></svg>
<div class="t" style="left:939px;top:623px">Show evaluation statistic</div>
<div class="a" style="left:922px;top:652px;width:14px;height:14px;border:1px solid #5c5c5c;background:#fff"></div>
<div class="t" style="left:939px;top:652px">Show last N episodes</div>
<div class="a" style="left:1066px;top:647px;width:97px;height:23px;border:1px solid #d2d2d2;background:#f0f0f0"></div>
<div class="t" style="left:1131.5px;top:653px;color:#a0a0a0">5000</div>

<!-- legend panel -->
<div class="a" style="left:911px;top:691px;width:263px;height:102px;border:1px solid #828282"></div>
<div class="a" style="left:917px;top:697px;width:251px;height:90px;background:#fff"></div>
<svg width="260" height="100" style="left:911px;top:691px" viewBox="911 691 260 100">
  <path d="M965,704.5H1005" stroke="#40bdf0" stroke-width="1"/><circle cx="985" cy="704.5" r="1.8" fill="#40bdf0"/>
  <path d="M965,723.5H1005" stroke="#0d6fc0" stroke-width="1.2"/><circle cx="985" cy="723.5" r="1.8" fill="#0d6fc0"/>
  <path d="M965,742.5H1005" stroke="#edb120" stroke-width="1"/><circle cx="985" cy="742.5" r="1.8" fill="#edb120"/>
  <path d="M980.3,770.4H990.5M985.4,765.3V775.5M981.8,766.8L989,774M989,766.8L981.8,774" stroke="#d22a9e" stroke-width="0.85"/>
</svg>
<div class="t" style="left:1009px;top:699px;font-size:10.7px">Episode reward</div>
<div class="t" style="left:1009px;top:718px;font-size:10.7px">Average reward</div>
<div class="t" style="left:1009px;top:737px;font-size:10.7px">Episode Q0</div>
<div class="t" style="left:1009px;top:760.5px;font-size:10.7px">Evaluation statistic</div>
<div class="t" style="left:1009px;top:772px;font-size:10.7px">(MeanEpisodeReward)</div>

<svg width="16" height="14" style="left:1184px;top:819px" viewBox="0 0 16 14"><path d="M2,1.5V12.5L10,7Z" fill="#8a8a8a"/><path d="M10,1.5V12.5" stroke="#8a8a8a" stroke-width="2"/></svg>
</body></html>
